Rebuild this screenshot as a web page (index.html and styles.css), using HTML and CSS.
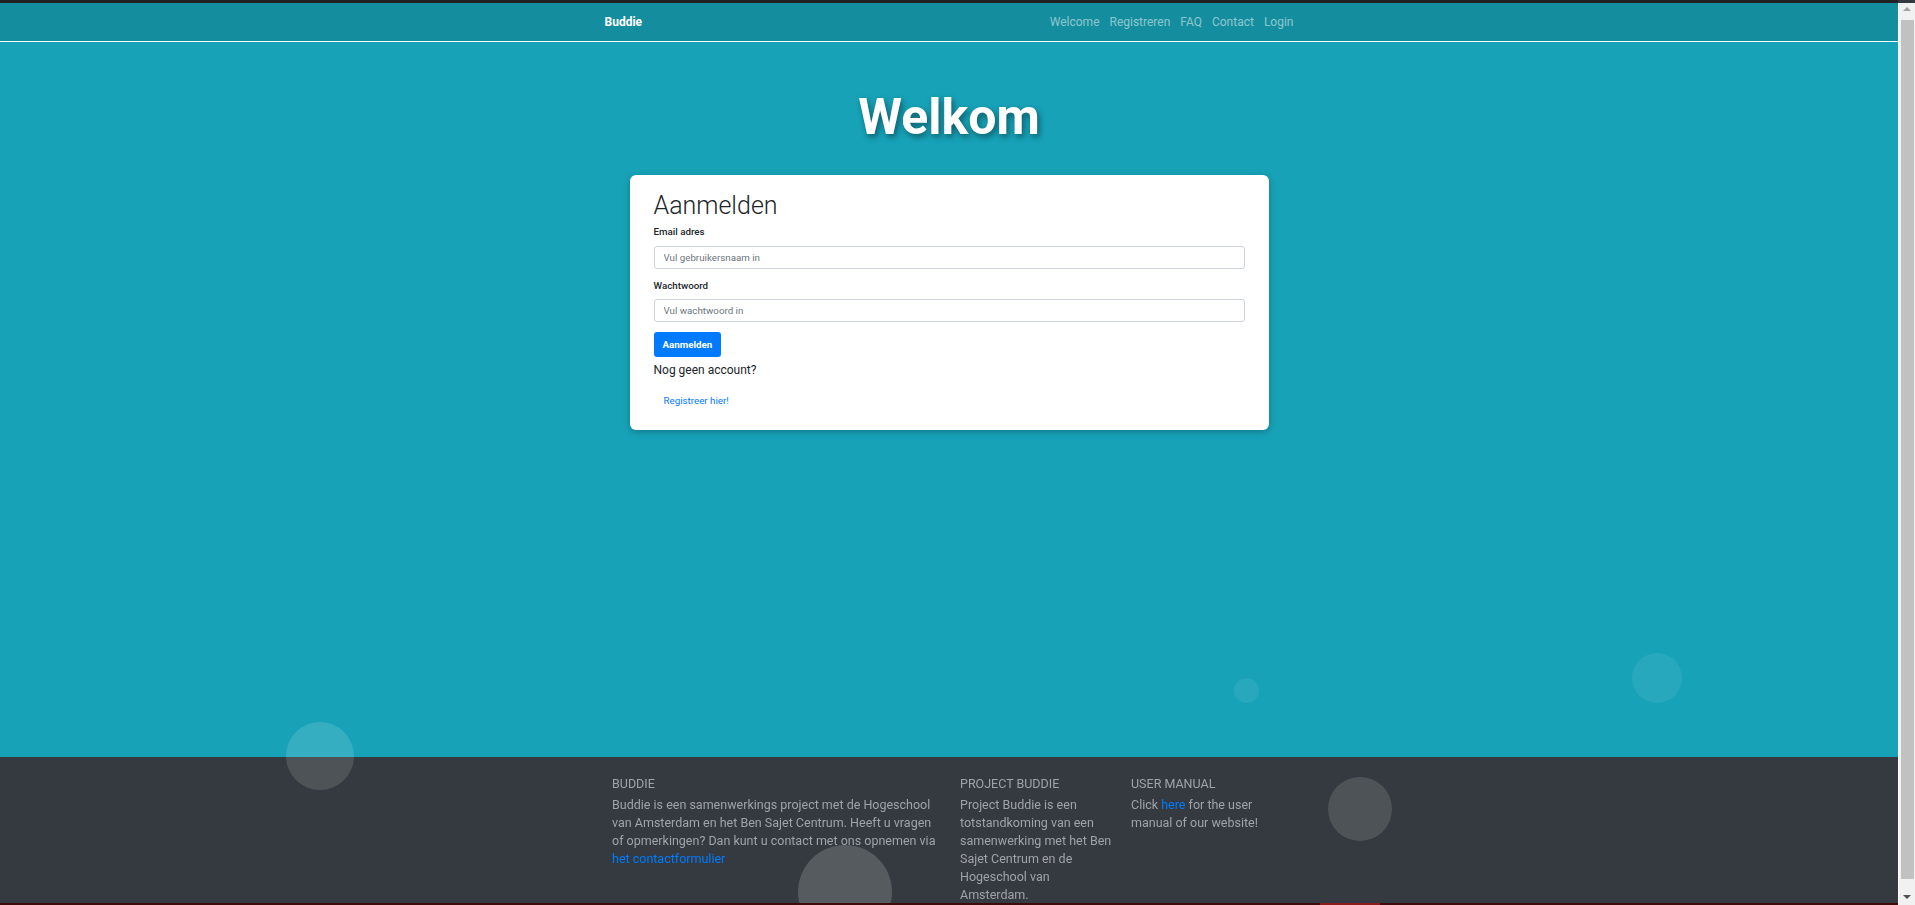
FILE: index.html
```html
<!DOCTYPE html>
<html lang="nl">
<head>
<meta charset="utf-8">
<title>Buddie - Aanmelden</title>
<link rel="stylesheet" href="styles.css">
</head>
<body>
<div class="topbar"></div>
<nav class="navbar">
  <div class="nav-inner">
    <a class="brand" href="#">Buddie</a>
    <ul class="nav-links">
      <li><a href="#">Welcome</a></li>
      <li><a href="#">Registreren</a></li>
      <li><a href="#">FAQ</a></li>
      <li><a href="#">Contact</a></li>
      <li><a href="#">Login</a></li>
    </ul>
  </div>
</nav>
<main class="hero">
  <h1 class="title">Welkom</h1>
  <div class="card">
    <h2 class="card-title">Aanmelden</h2>
    <form class="login-form">
      <div class="form-group">
        <label class="form-label">Email adres</label>
        <input class="form-input" type="text" placeholder="Vul gebruikersnaam in">
      </div>
      <div class="form-group">
        <label class="form-label">Wachtwoord</label>
        <input class="form-input" type="password" placeholder="Vul wachtwoord in">
      </div>
      <button class="btn-primary" type="button">Aanmelden</button>
    </form>
    <p class="no-account">Nog geen account?</p>
    <a class="register-link" href="#">Registreer hier!</a>
  </div>
</main>
<footer class="footer">
  <div class="footer-inner">
    <div class="footer-col">
      <h5 class="footer-heading">Buddie</h5>
      <p class="footer-text">Buddie is een samenwerkings project met de Hogeschool van Amsterdam en het Ben Sajet Centrum. Heeft u vragen of opmerkingen? Dan kunt u contact met ons opnemen via <a class="footer-link" href="#">het contactformulier</a></p>
    </div>
    <div class="footer-col">
      <h5 class="footer-heading">Project Buddie</h5>
      <p class="footer-text">Project Buddie is een totstandkoming van een samenwerking met het Ben Sajet Centrum en de Hogeschool van Amsterdam.</p>
    </div>
    <div class="footer-col">
      <h5 class="footer-heading">User manual</h5>
      <p class="footer-text">Click <a class="footer-link" href="#">here</a> for the user manual of our website!</p>
    </div>
  </div>
</footer>
<div class="bubbles">
  <span class="bubble b1"></span>
  <span class="bubble b2"></span>
  <span class="bubble b3"></span>
  <span class="bubble b4"></span>
  <span class="bubble b5"></span>
</div>
<div class="taskline"><span class="taskline-mark"></span></div>
<div class="scrollbar">
  <span class="sb-arrow sb-up"></span>
  <span class="sb-thumb"></span>
  <span class="sb-arrow sb-down"></span>
</div>
</body>
</html>
```
FILE: styles.css
```css
html {
  background: #343a40;
}
body {
  margin: 0;
  padding-right: 17px;
  font-family: Roboto, "Liberation Sans", Arial, sans-serif;
  font-size: 12px;
  line-height: 1.5;
  color: #212529;
  position: relative;
}

.topbar {
  height: 3px;
  background: #212121;
}
.navbar {
  height: 38px;
  background: #148d9e;
  border-bottom: 1px solid #ffffff;
  display: flex;
  align-items: center;
}
.nav-inner {
  width: 689px;
  margin: 0 auto;
  display: flex;
  justify-content: space-between;
  align-items: center;
}
.brand {
  color: #ffffff;
  font-weight: 700;
  font-size: 12px;
  text-decoration: none;
}
.nav-links {
  list-style: none;
  margin: 0;
  padding: 0;
  display: flex;
  gap: 10px;
}
.nav-links a {
  color: rgba(255, 255, 255, 0.52);
  text-decoration: none;
  font-size: 12px;
}

.hero {
  height: 715px;
  box-sizing: border-box;
  padding-top: 46px;
  background: #17a2b8;
}
.title {
  margin: 0 0 28px;
  text-align: center;
  color: #ffffff;
  font-size: 50px;
  font-weight: 700;
  line-height: 59px;
  text-shadow: 2px 3px 6px rgba(0, 0, 0, 0.45);
}
.card {
  width: 639px;
  box-sizing: border-box;
  margin: 0 auto;
  padding: 16px 24px 21px;
  background: #ffffff;
  border-radius: 6px;
  box-shadow: 0 2px 7px rgba(0, 0, 0, 0.25);
}
.card-title {
  margin: 0 0 5px;
  font-size: 25px;
  font-weight: 300;
  line-height: 29px;
  color: #212529;
}
.login-form {
  margin: 0;
}
.form-group {
  margin-bottom: 10px;
}
.form-label {
  display: block;
  font-size: 9.75px;
  font-weight: 500;
  line-height: 1.5;
  margin-bottom: 6px;
  color: #212529;
}
.form-input {
  display: block;
  width: 100%;
  height: 23px;
  box-sizing: border-box;
  padding: 0 9px;
  font-family: inherit;
  font-size: 9.75px;
  color: #495057;
  border: 1px solid #ced4da;
  border-radius: 3px;
  background: #ffffff;
}
.form-input::placeholder {
  color: #6c757d;
}
.btn-primary {
  display: block;
  height: 25px;
  padding: 0 9px;
  font-family: inherit;
  font-size: 9.75px;
  font-weight: 700;
  color: #ffffff;
  background: #007bff;
  border: 0;
  border-radius: 3px;
}
.no-account {
  margin: 4px 0 0;
  font-size: 12px;
  line-height: 18px;
  color: #212529;
}
.register-link {
  display: block;
  margin-top: 15px;
  padding-left: 10px;
  font-size: 9.75px;
  line-height: 1.5;
  color: #007bff;
  text-decoration: none;
}

.footer {
  background: #343a40;
  padding: 18px 0 26px;
}
.footer-inner {
  position: relative;
  z-index: 1;
  width: 677px;
  margin: 0 auto;
  padding-left: 3px;
  display: grid;
  grid-template-columns: 333px 156px 157px;
  column-gap: 15px;
}
.footer-heading {
  margin: 0 0 3px;
  font-size: 12.5px;
  font-weight: 400;
  line-height: 18px;
  text-transform: uppercase;
  color: #a0a3a7;
}
.footer-text {
  margin: 0;
  font-size: 12.5px;
  line-height: 18px;
  color: #a0a3a7;
}
.footer-link {
  color: #007bff;
  text-decoration: none;
}

.bubbles {
  position: absolute;
  top: 0;
  left: 0;
  width: 100%;
  height: 100%;
  overflow: hidden;
  pointer-events: none;
}
.bubble {
  position: absolute;
  border-radius: 50%;
  background: #ffffff;
}
.b1 { left: 286px; top: 722px; width: 68px; height: 68px; opacity: 0.13; }
.b2 { left: 798px; top: 845px; width: 94px; height: 94px; opacity: 0.17; }
.b3 { left: 1328px; top: 777px; width: 64px; height: 64px; opacity: 0.13; }
.b4 { left: 1632px; top: 653px; width: 50px; height: 50px; opacity: 0.07; }
.b5 { left: 1234px; top: 678px; width: 25px; height: 25px; opacity: 0.07; }

.taskline {
  position: fixed;
  left: 0;
  right: 0;
  bottom: 0;
  height: 2px;
  background: #3f0b0b;
}
.taskline-mark {
  position: absolute;
  left: 1320px;
  width: 60px;
  top: 0;
  bottom: 0;
  background: #8c1c1c;
}

.scrollbar {
  position: fixed;
  top: 3px;
  right: 0;
  bottom: 0;
  width: 17px;
  background: #f1f1f1;
  border-left: 1px solid #ffffff;
  box-sizing: border-box;
  display: flex;
  flex-direction: column;
  align-items: center;
}
.sb-arrow {
  width: 0;
  height: 0;
  border-left: 4px solid transparent;
  border-right: 4px solid transparent;
}
.sb-up {
  margin-top: 4px;
  border-bottom: 4px solid #a3a3a3;
}
.sb-down {
  margin-bottom: 6px;
  border-top: 4px solid #505050;
}
.sb-thumb {
  width: 13px;
  margin: 9px 0 9px;
  flex: 1;
  background: #c1c1c1;
  margin-bottom: 16px;
}
```
